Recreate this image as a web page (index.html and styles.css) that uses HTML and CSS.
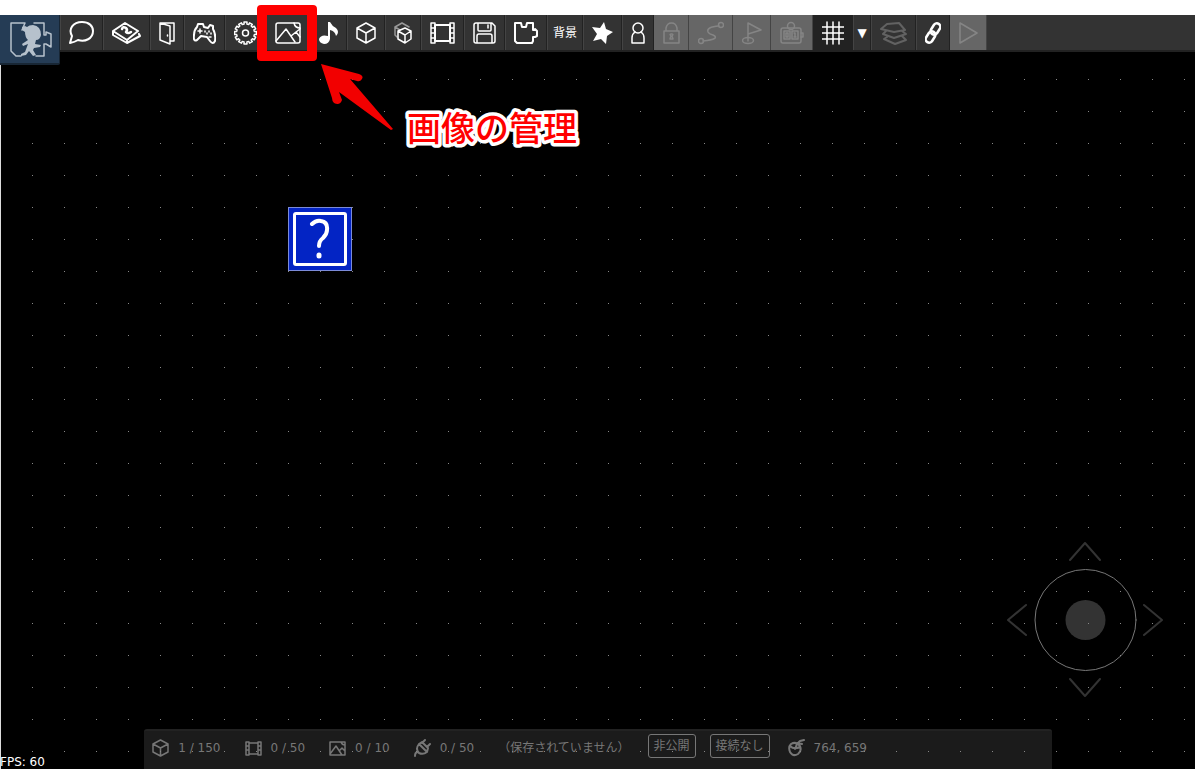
FILE: index.html
```html
<!DOCTYPE html>
<html lang="ja">
<head>
<meta charset="utf-8">
<title>エディター</title>
<link rel="stylesheet" href="styles.css">
</head>
<body>
<div class="page">
<header class="toolbar">
<button class="logo" aria-label="ホーム"><svg width="42" height="36" viewBox="0 0 42 36"><path class="outline" d="M11 34H6L1 29V1H15L12 8M24 1H34V13H36V10L41 12V25L36 22H34V34H26"/><path class="solid" d="M12 5L15 4L17 5Q19 3 23 3Q31 4 31 13Q30 18 26 18L25 22L31 23L30 25L24 26L23 28L26 33L23 34L19 29L16 33L11 34V32L15 30L18 22L13 24L12 22L18 18Q15 15 15 10L12 8Z"/></svg></button>
<button class="tool" aria-label="チャット"><svg width="25" height="24" viewBox="0 0 25 24"><path class="heavy" d="M1 22L3 15C-1 8 4 1 13 1C20 1 24 5 24 10C24 18 16 21 9 19Q6 21 1 22Z"/></svg></button>
<button class="tool" aria-label="ヘルプ"><svg width="29" height="24" viewBox="0 0 29 24"><path class="heavy" d="M1 10L13 2L26 10L15 19ZM1 10V14L15 22L28 15L27 13M15 19V22"/><path class="bold" d="M10 8Q11 5 14 7Q16 9 14 11Q16 13 19 11"/></svg></button>
<button class="tool" aria-label="入口"><svg width="16" height="24" viewBox="0 0 16 24"><path d="M11 20H15V2H1V19L11 23V5L1 2"/><path d="M8.500 14V15"/></svg></button>
<button class="tool" aria-label="操作"><svg width="23" height="24" viewBox="0 0 23 24"><path class="heavy" d="M4 6L5 3L10 3L11 6L15 7L17 4L20 5V8Q23 13 22 20Q20 24 17 20L14 16L8 15L4 19Q0 21 1 14Q1 9 4 6Z"/><path d="M5 10H9M7 8V12M12 10V11M16 10V11M18 12V13M14 12V13M16 16H18"/></svg></button>
<button class="tool" aria-label="設定"><svg width="23" height="24" viewBox="0 0 23 24"><path d="M10.100 3.100L10 1.100L13 1.100L12.900 3.100L14.700 3.600L15.600 1.800L18.300 3.300L17.200 5L18.500 6.300L20.200 5.200L21.700 7.900L19.900 8.800L20.400 10.600L22.400 10.500V13.500L20.400 13.400L19.900 15.200L21.700 16.100L20.200 18.800L18.500 17.700L17.200 19L18.300 20.700L15.600 22.200L14.700 20.400L12.900 20.900L13 22.900H10L10.100 20.900L8.300 20.400L7.400 22.200L4.700 20.700L5.800 19L4.500 17.700L2.800 18.800L1.300 16.100L3.100 15.200L2.600 13.400L.6 13.500V10.500L2.600 10.600L3.100 8.800L1.300 7.900L2.800 5.200L4.500 6.300L5.800 5L4.700 3.300L7.400 1.800L8.300 3.600Z"/><circle cx="11.500" cy="12" r="3"/></svg></button>
<button class="tool" aria-label="画像の管理"><svg width="26" height="24" viewBox="0 0 26 24"><rect x="1" y="2" width="24" height="20" rx="2"/><path d="M1 20L11 8L20 21M16 15L21 11L25 8M21 11L25 16M19 2Q20 7 25 7"/></svg></button>
<button class="tool" aria-label="音楽"><svg width="19" height="24" viewBox="0 0 19 24"><path class="solid" d="M9 1H11Q13 5 17 7Q21 11 17 15Q16 10 11 9V18Q10 23 5 23Q0 22 0 18Q2 13 9 15Z"/></svg></button>
<button class="tool" aria-label="ブロック"><svg width="20" height="24" viewBox="0 0 20 24"><path d="M10 2L19 7V17L10 22L1 17V7ZM1 7L10 12L19 7M10 12V22"/></svg></button>
<button class="tool" aria-label="ブロックの複製"><svg width="18" height="24" viewBox="0 0 18 24"><path class="faded" d="M3 16L1 14V6L8 2L15 6M1 6L6 9"/><path d="M11 7L17 10V18L11 22L4 18V10ZM4 10L11 14L17 10M11 14V22"/></svg></button>
<button class="tool" aria-label="アニメーション"><svg width="25" height="24" viewBox="0 0 25 24"><path class="heavy" d="M5 4H20V20H5Z"/><path d="M1 2H5V22H1ZM20 2H24V22H20ZM1 7H5M1 12H5M1 17H5M20 7H24M20 12H24M20 17H24"/></svg></button>
<button class="tool" aria-label="保存"><svg width="23" height="24" viewBox="0 0 23 24"><path d="M3 2H19L22 5V20Q22 22 20 22H3Q1 22 1 20V4Q1 2 3 2ZM5 2V9Q5 10 6 10H17Q18 10 18 9V2M4 22V15Q4 13 6 13H17Q19 13 19 15V22M15 4V7"/></svg></button>
<button class="tool" aria-label="プラグイン"><svg width="24" height="24" viewBox="0 0 24 24"><path class="heavy" d="M1 2H7L8 6H12L13 2H19V9H21V8L23 10V15L21 16H19V20L18 22H3L1 20Z"/></svg></button>
<button class="tool label-tool">背景</button>
<button class="tool" aria-label="お気に入り"><svg width="21" height="24" viewBox="0 0 21 24"><path class="solid" d="M12 1L14 8L21 11L15 15L14 23L9 18L1 20L5 13L0 6L8 7Z"/></svg></button>
<button class="tool" aria-label="プレイヤー"><svg width="14" height="24" viewBox="0 0 14 24"><path d="M4 11Q1 13 1 17V22H13V17Q13 13 10 11"/><circle cx="7" cy="7" r="5"/></svg></button>
<button class="tool" disabled aria-label="ロック"><svg width="17" height="24" viewBox="0 0 17 24"><path d="M3 10V7Q4 2 8.500 2Q13 2 14 7V10M1 10H16V22H1ZM7 18H10L9 15Q11 13 8.500 13Q6 13 8 15Z"/></svg></button>
<button class="tool" disabled aria-label="経路"><svg width="26" height="24" viewBox="0 0 26 24"><path d="M21 5Q8 6 10 11Q11 13 15 14Q23 18 5 20"/><circle cx="23" cy="4" r="2.500"/><circle cx="3" cy="20" r="2.500"/></svg></button>
<button class="tool" disabled aria-label="旗"><svg width="20" height="24" viewBox="0 0 20 24"><path d="M6 20V2L19 9L6 13"/><ellipse cx="6" cy="19.500" rx="5.500" ry="3"/></svg></button>
<button class="tool" disabled aria-label="カウンター"><svg width="24" height="24" viewBox="0 0 24 24"><rect x="1" y="7" width="20" height="15" rx="2"/><circle cx="11" cy="5" r="3.500"/><path d="M4 10H10V18H4ZM12 10H18V18H12ZM6 12H8V16H6ZM14 12H15V16M14 16H16M21 12H23V16H21"/></svg></button>
<button class="tool pressed" aria-pressed="true" aria-label="グリッド"><svg width="22" height="24" viewBox="0 0 22 24"><path d="M0 6H22M0 12H22M0 18H22M5 1V23M11 1V23M17 1V23"/></svg></button>
<button class="tool menu-tool" aria-label="グリッドの設定">▼</button>
<button class="tool muted" aria-label="レイヤー"><svg width="27" height="24" viewBox="0 0 27 24"><path class="heavy" d="M7 3L19 2L25 9L14 11L1 8ZM6 10L3 13L14 17L26 13L22 10M7 16L4 18L15 23L26 19L22 15"/></svg></button>
<button class="tool" aria-label="リンク"><svg width="16" height="24" viewBox="0 0 16 24"><g class="bold"><rect x="7" y="2" width="7" height="12" rx="3.500" transform="rotate(32 10.500 8)"/><rect x="2" y="10" width="7" height="12" rx="3.500" transform="rotate(32 5.500 16)"/></g></svg></button>
<button class="tool" disabled aria-label="テスト"><svg width="19" height="24" viewBox="0 0 19 24"><path d="M1 2L18 12L1 22Z"/></svg></button>
</header>
<main class="stage">
<div class="block"><div class="block-frame"><svg width="22" height="42" viewBox="0 0 22 42"><path d="M3 6Q7 2 12 3Q19 4 18 12Q18 16 14 20Q10 23 10 28"/><path class="dot" d="M10 37V38"/></svg></div></div>
<svg class="stick" width="156" height="156" viewBox="0 0 156 156" aria-label="スティック"><circle class="ring" cx="78.500" cy="78" r="50.500"/><circle class="knob" cx="78.500" cy="78" r="20"/><path d="M63 18L78 1L93 18M63 137L78 154L93 137M19 63L1 78L19 93M137 63L155 78L137 93"/></svg>
<div class="fps">FPS: 60</div>
<footer class="status">
<span class="stat"><svg width="17" height="20" viewBox="0 0 17 20"><path d="M8.500 2L16 6V14L8.500 18L1 14V6ZM1 6L8.500 10L16 6M8.500 10V18"/></svg>1 / 150</span>
<span class="stat"><svg width="17" height="20" viewBox="0 0 17 20"><path d="M4 5H13V16H4ZM1 4H4V17H1ZM13 4H16V17H13ZM1 8H4M1 12H4M13 8H16M13 12H16"/></svg>0 / 50</span>
<span class="stat"><svg width="17" height="20" viewBox="0 0 17 20"><path d="M1 4H16V17H1ZM1 16L7 8L13 17M11 12L13 10L16 13M12 4Q13 7 16 7"/></svg>0 / 10</span>
<span class="stat"><svg width="17" height="20" viewBox="0 0 17 20"><path class="heavy" d="M5 6L13 14Q9 17 5 15Q1 11 5 6ZM5 6L8 4L14 10L13 14M8 5L11 2M13 9L16 6M4 14Q1 14 1 18"/></svg>0 / 50</span>
<span>（保存されていません）</span>
<span class="actions"><button class="chip">非公開</button><button class="chip">接続なし</button></span>
<span class="stat"><svg width="17" height="20" viewBox="0 0 17 20"><path class="heavy" d="M3 6Q8 3 12 8Q14 13 10 16Q5 19 2 14Q0 9 3 6ZM2 8Q6 12 12 9M7 11L9 6L12 3L16 2M10 5L14 6"/></svg>764, 659</span>
</footer>
</main>
<div class="highlight"></div>
<svg class="pointer" width="74" height="68" viewBox="0 0 74 68"><path d="M0 0L38 10Q43 12 41 15Q39 18 36 17L29 15L72 65L70 66L18 28L21 36Q19 42 13 39Q11 37 11 34Z"/></svg>
<svg class="caption" width="182" height="50" viewBox="0 0 182 50"><text x="6" y="38">画像の管理</text></svg>
</div>
</body>
</html>
```
FILE: styles.css
```css
* { box-sizing: border-box; }
body { margin: 0; background: #fff; color: #fff; font: 12px/18px "DejaVu Sans", "Noto Sans CJK JP", sans-serif; }
button { margin: 0; padding: 0; border: 0; color: inherit; font: inherit; cursor: pointer; }
button:disabled { cursor: default; }
svg { display: block; flex: none; fill: none; stroke: currentColor; stroke-width: 1.5; stroke-linejoin: round; stroke-linecap: round; }
.heavy { stroke-width: 2; }
.bold { stroke-width: 2.5; }
.solid { fill: currentColor; stroke: none; }
.faded { opacity: .5; }
.page { position: relative; display: flex; flex-direction: column; min-height: 100vh; padding-top: 15px; overflow: hidden; }

.toolbar { position: relative; z-index: 1; display: flex; align-items: flex-start; height: 37px; background: #333; border-bottom: 2px solid #222; }
.logo { flex: none; display: flex; padding: 7px 7px 5px 10px; background: #253c55; border-bottom: 2px solid #182634; border-right: 1px solid #182634; border-radius: 0 0 2px 0; color: #b6c1cc; }
.tool { flex: none; display: flex; align-items: center; height: 35px; padding: 0 8px; background: #333; border-left: 1px solid #444; border-right: 1px solid #222; color: #fff; }
.tool:disabled { background: #666; border-left-color: #666; border-right-color: #444; color: #858585; }
.label-tool { padding: 0 5px; }
.menu-tool { width: 18px; padding: 0; justify-content: center; }
.pressed { background: #222; border-left-color: #222; }
.muted { color: #626262; }

.stage { position: relative; flex: 1; display: flex; flex-direction: column; justify-content: flex-end; background: #000; border-left: 1px solid #ddd; }
.stage::after { content: ""; position: absolute; inset: 0 0 0 -1px; pointer-events: none; background: conic-gradient(at 1px 1px, transparent 0 270deg, #888 270deg) 0 27px / 32px 32px; clip-path: inset(0 0 0 1px); }
.block { position: absolute; z-index: 1; left: 287px; top: 155px; width: 64px; height: 64px; padding: 4px; background: #0324c4; border: 1px solid #7c8bd8; }
.block-frame { display: grid; place-items: center; height: 100%; border: 3px solid #fff; border-radius: 3px; }
.block svg { stroke-width: 4; }
.block .dot { stroke-width: 5; }
.stick { position: absolute; right: 32px; bottom: 71px; color: #333; stroke-width: 2; }
.ring { stroke: #777; stroke-width: 1; }
.knob { fill: #333; stroke: none; }
.fps { position: absolute; left: -1px; bottom: -2px; }
.status { align-self: center; display: flex; align-items: center; gap: 24px; width: 76%; height: 40px; padding: 0 8px 4px; background: #1b1b1b; border-top: 2px solid #222; border-radius: 3px 3px 0 0; color: #777; white-space: nowrap; }
.stat { display: flex; align-items: center; gap: 9px; }
.actions { display: flex; gap: 14px; margin: 0 -6px; padding-bottom: 4px; }
.chip { height: 24px; padding: 0 5px; background: transparent; border: 1px solid #777; border-radius: 3px; }

.highlight { position: absolute; z-index: 2; left: 257px; top: 5px; width: 60px; height: 56px; border: 10px solid #f00; border-radius: 4px; }
.pointer { position: absolute; left: 321px; top: 64px; fill: #f20000; stroke: none; }
.caption { position: absolute; left: 401px; top: 103px; fill: #f00; stroke: #fff; stroke-width: 7; paint-order: stroke fill; font: 500 34px "Noto Sans CJK JP", sans-serif; }
```
